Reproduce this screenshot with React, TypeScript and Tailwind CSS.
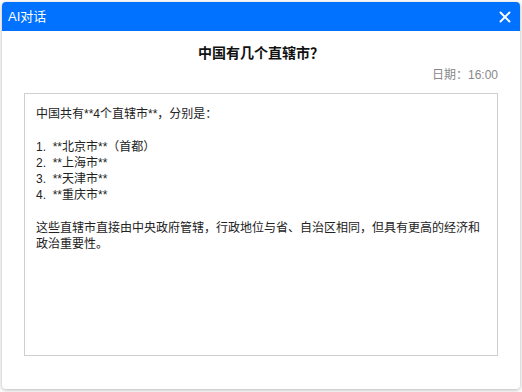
import { X } from "lucide-react";

const answer = `中国共有**4个直辖市**，分别是：

1.  **北京市**（首都）
2.  **上海市**
3.  **天津市**
4.  **重庆市**

这些直辖市直接由中央政府管辖，行政地位与省、自治区相同，但具有更高的经济和政治重要性。`;

export default function App() {
  return (
    <div
      className="w-[522px] h-[392px] bg-white pt-[2px] pl-[2px]"
      style={{ fontFamily: '"Liberation Sans", "Noto Sans CJK SC", sans-serif' }}
    >
      <div className="w-[518px] h-[387px] bg-white rounded-[4px] overflow-hidden shadow-[0_1px_4px_rgba(0,0,0,0.3)] flex flex-col">
        <div className="h-[29px] bg-[#0072ff] flex items-center justify-between pl-[6px] pr-[6px]">
          <span className="text-white text-[13px]">AI对话</span>
          <X className="text-white w-[18px] h-[18px]" strokeWidth={2.5} />
        </div>
        <div className="flex flex-col px-[22px]">
          <h1 className="mt-[12px] text-center text-[14px] leading-[20px] font-bold text-[#111]">
            中国有几个直辖市？
          </h1>
          <div className="mt-[4px] text-right text-[12px] leading-[17px] text-[#888]">
            日期：16:00
          </div>
          <div className="mt-[9px] h-[263px] border border-[#cfcfcf] pt-[12px] px-[11px] text-[12px] leading-[16.3px] text-[#222] whitespace-pre-wrap">
            {answer}
          </div>
        </div>
      </div>
    </div>
  );
}
